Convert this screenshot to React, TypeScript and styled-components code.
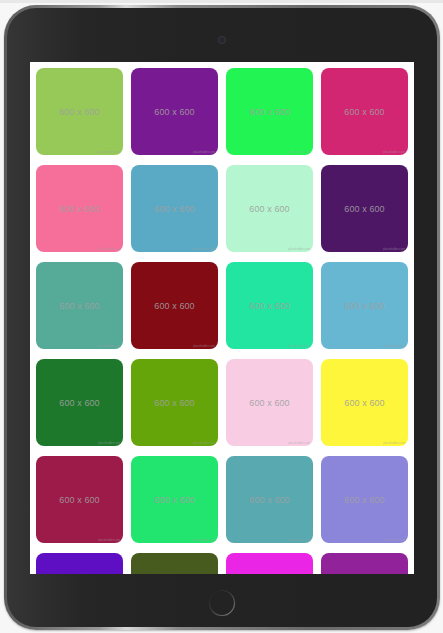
import React from "react";
import styled, { createGlobalStyle } from "styled-components";

const Global = createGlobalStyle`
  html, body { margin: 0; padding: 0; }
  body {
    background: #f7f7f7;
    font-family: "Liberation Sans", Arial, sans-serif;
    width: 443px;
    height: 633px;
    overflow: hidden;
  }
`;

const Page = styled.div`
  width: 443px;
  height: 633px;
  display: flex;
  flex-direction: column;
`;

const TopStrip = styled.div`
  height: 3px;
  background: #e8e8e8;
  flex-shrink: 0;
`;

const Stage = styled.div`
  padding: 2px 2px 0 4px;
  display: flex;
`;

const Shell = styled.div`
  width: 436px;
  height: 625px;
  border-radius: 32px;
  padding: 3px;
  box-sizing: border-box;
  background: linear-gradient(90deg, #5a5a5a 0%, #9a9a9a 22%, #d8d8d8 28%, #8a8a8a 40%, #6a6a6a 70%, #7a7a7a 100%);
  box-shadow: 0 1px 2px rgba(0, 0, 0, 0.25);
`;

const Bezel = styled.div`
  width: 100%;
  height: 100%;
  border-radius: 29px;
  background: linear-gradient(90deg, #363636 0%, #2e2e2e 8%, #262626 18%, #232323 40%, #222222 100%);
  display: flex;
  flex-direction: column;
  align-items: center;
  overflow: hidden;
`;

const CameraArea = styled.div`
  height: 54px;
  flex-shrink: 0;
  display: flex;
  justify-content: center;
  align-items: flex-start;
  padding-top: 28px;
  box-sizing: border-box;
`;

const Camera = styled.div`
  width: 8px;
  height: 8px;
  border-radius: 50%;
  box-sizing: border-box;
  border: 1.5px solid #3a3a48;
  background: #25252d;
`;

const Screen = styled.div`
  width: 384px;
  height: 512px;
  background: #ffffff;
  overflow: hidden;
  flex-shrink: 0;
`;

const Grid = styled.div`
  display: grid;
  grid-template-columns: repeat(4, 87px);
  column-gap: 8px;
  row-gap: 10px;
  padding: 6px;
`;

const Tile = styled.div<{ $bg: string }>`
  position: relative;
  width: 87px;
  height: 87px;
  border-radius: 8px;
  background: ${(p) => p.$bg};
  display: flex;
  align-items: center;
  justify-content: center;
  overflow: hidden;
`;

const Label = styled.span`
  font-family: "Liberation Sans", Arial, sans-serif;
  font-size: 9px;
  color: rgba(160, 160, 160, 0.9);
  letter-spacing: 0.1px;
`;

const Mark = styled.span`
  position: absolute;
  right: 3px;
  bottom: 1px;
  font-family: "Liberation Sans", Arial, sans-serif;
  font-size: 3px;
  color: rgba(160, 160, 160, 0.6);
`;

const HomeArea = styled.div`
  flex: 1;
  display: flex;
  justify-content: center;
  align-items: flex-start;
  padding-top: 15px;
  box-sizing: border-box;
`;

const colors = [
  "#96c957", "#781a91", "#22f553", "#d22672",
  "#f56f9a", "#5aaac5", "#b5f5cf", "#4e1766",
  "#55aa98", "#820b14", "#21e5a0", "#67b6d2",
  "#1e782c", "#65a50a", "#f8cde4", "#fef63a",
  "#9c1b48", "#22e56f", "#58a9b0", "#8c86db",
  "#5f0fc3", "#465b1d", "#ea25e6", "#91229a",
];

const HomeButton = () => (
  <svg width="28" height="28" viewBox="0 0 28 28">
    <defs>
      <linearGradient id="hb" x1="0.1" y1="0.1" x2="0.8" y2="0.9">
        <stop offset="0" stopColor="#232323" />
        <stop offset="0.45" stopColor="#3a3a3a" />
        <stop offset="1" stopColor="#6e6e6e" />
      </linearGradient>
    </defs>
    <circle cx="14" cy="14" r="12.5" fill="none" stroke="url(#hb)" strokeWidth="1.2" />
  </svg>
);

export default function App() {
  return (
    <Page>
      <Global />
      <TopStrip />
      <Stage>
        <Shell>
          <Bezel>
            <CameraArea>
              <Camera />
            </CameraArea>
            <Screen>
              <Grid>
                {colors.map((c, i) => (
                  <Tile key={i} $bg={c}>
                    <Label>600 x 600</Label>
                    <Mark>placeholder.com</Mark>
                  </Tile>
                ))}
              </Grid>
            </Screen>
            <HomeArea>
              <HomeButton />
            </HomeArea>
          </Bezel>
        </Shell>
      </Stage>
    </Page>
  );
}
